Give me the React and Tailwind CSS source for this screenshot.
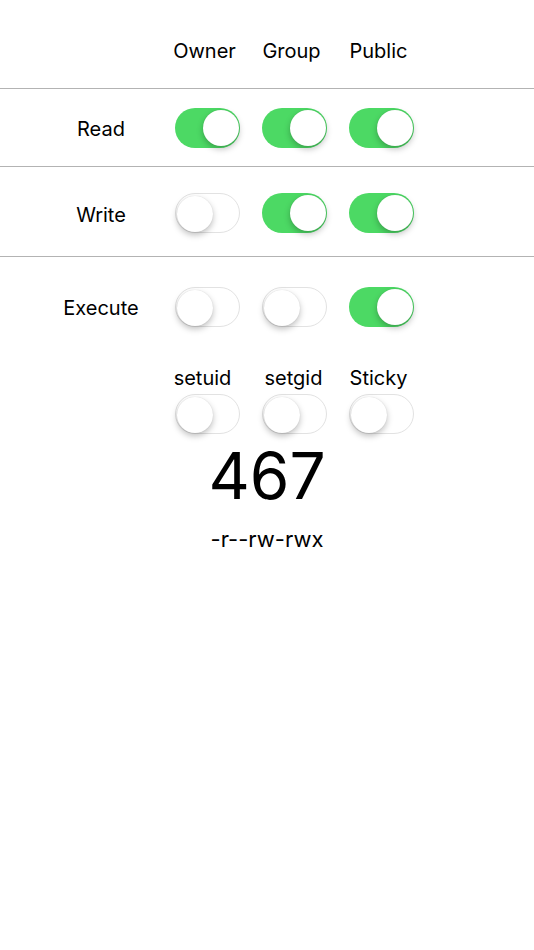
import { useState } from "react";

const Toggle = ({ on, onChange }) => (
  <button
    onClick={onChange}
    className={`relative w-[65px] h-[40px] rounded-full shrink-0 transition-colors ${
      on ? "bg-[#4cd964]" : "bg-white border-[1.5px] border-[#e2e2e2]"
    }`}
  >
    <span
      className={`absolute top-[2px] w-[36px] h-[36px] rounded-full bg-white shadow-[0_3px_6px_rgba(0,0,0,0.25),0_0_1px_rgba(0,0,0,0.15)] transition-all ${
        on ? "right-[1px]" : "left-[1px] top-[1px]"
      }`}
    />
  </button>
);

const Row = ({ label, values, onToggle, className }) => (
  <div className={`flex items-center ${className}`}>
    <div className="w-[175px] pl-[27px] pt-[3px] text-center text-[20px]">{label}</div>
    <div className="flex gap-[22px]">
      {values.map((v, i) => (
        <Toggle key={i} on={v} onChange={() => onToggle(i)} />
      ))}
    </div>
  </div>
);

export default function App() {
  const [perms, setPerms] = useState({
    read: [true, true, true],
    write: [false, true, true],
    exec: [false, false, true],
    special: [false, false, false],
  });

  const flip = (key) => (i) =>
    setPerms((p) => ({ ...p, [key]: p[key].map((v, j) => (j === i ? !v : v)) }));

  const digit = (i) =>
    (perms.read[i] ? 4 : 0) + (perms.write[i] ? 2 : 0) + (perms.exec[i] ? 1 : 0);
  const special =
    (perms.special[0] ? 4 : 0) + (perms.special[1] ? 2 : 0) + (perms.special[2] ? 1 : 0);
  const octal = `${special > 0 ? special : ""}${digit(0)}${digit(1)}${digit(2)}`;
  const symbolic =
    "-" +
    [0, 1, 2]
      .map(
        (i) =>
          (perms.read[i] ? "r" : "-") + (perms.write[i] ? "w" : "-") + (perms.exec[i] ? "x" : "-")
      )
      .join("");

  return (
    <div className="min-h-screen bg-white text-black font-['Inter','Noto_Sans',sans-serif]">
      {/* header */}
      <div className="h-[89px] flex items-center pt-[13px] border-b border-[#b3b3b3]">
        <div className="w-[172px]" />
        <div className="flex gap-[22px] text-[20px]">
          <div className="w-[65px] text-center">Owner</div>
          <div className="w-[65px] text-center">Group</div>
          <div className="w-[65px] text-center">Public</div>
        </div>
      </div>

      <Row label="Read" values={perms.read} onToggle={flip("read")} className="h-[78px] border-b border-[#b3b3b3]" />
      <Row label="Write" values={perms.write} onToggle={flip("write")} className="h-[90px] pt-[3px] border-b border-[#b3b3b3]" />
      <Row label="Execute" values={perms.exec} onToggle={flip("exec")} className="h-[70px] pt-[29px]" />

      {/* special bits */}
      <div className="flex mt-[39px]">
        <div className="w-[175px]" />
        <div className="flex flex-col">
          <div className="flex gap-[22px] text-[20px] leading-[24px]">
            <div className="w-[65px] text-center -ml-[5px]">setuid</div>
            <div className="w-[65px] text-center ml-[4px] -mr-[4px]">setgid</div>
            <div className="w-[65px] text-center ml-[2px]">Sticky</div>
          </div>
          <div className="flex gap-[22px] mt-[4px]">
            {perms.special.map((v, i) => (
              <Toggle key={i} on={v} onChange={() => flip("special")(i)} />
            ))}
          </div>
        </div>
      </div>

      <div className="text-center text-[64px] leading-[76px] mt-[4px]">{octal}</div>
      <div className="text-center text-[22px] leading-[28px] mt-[11px]">{symbolic}</div>
    </div>
  );
}
